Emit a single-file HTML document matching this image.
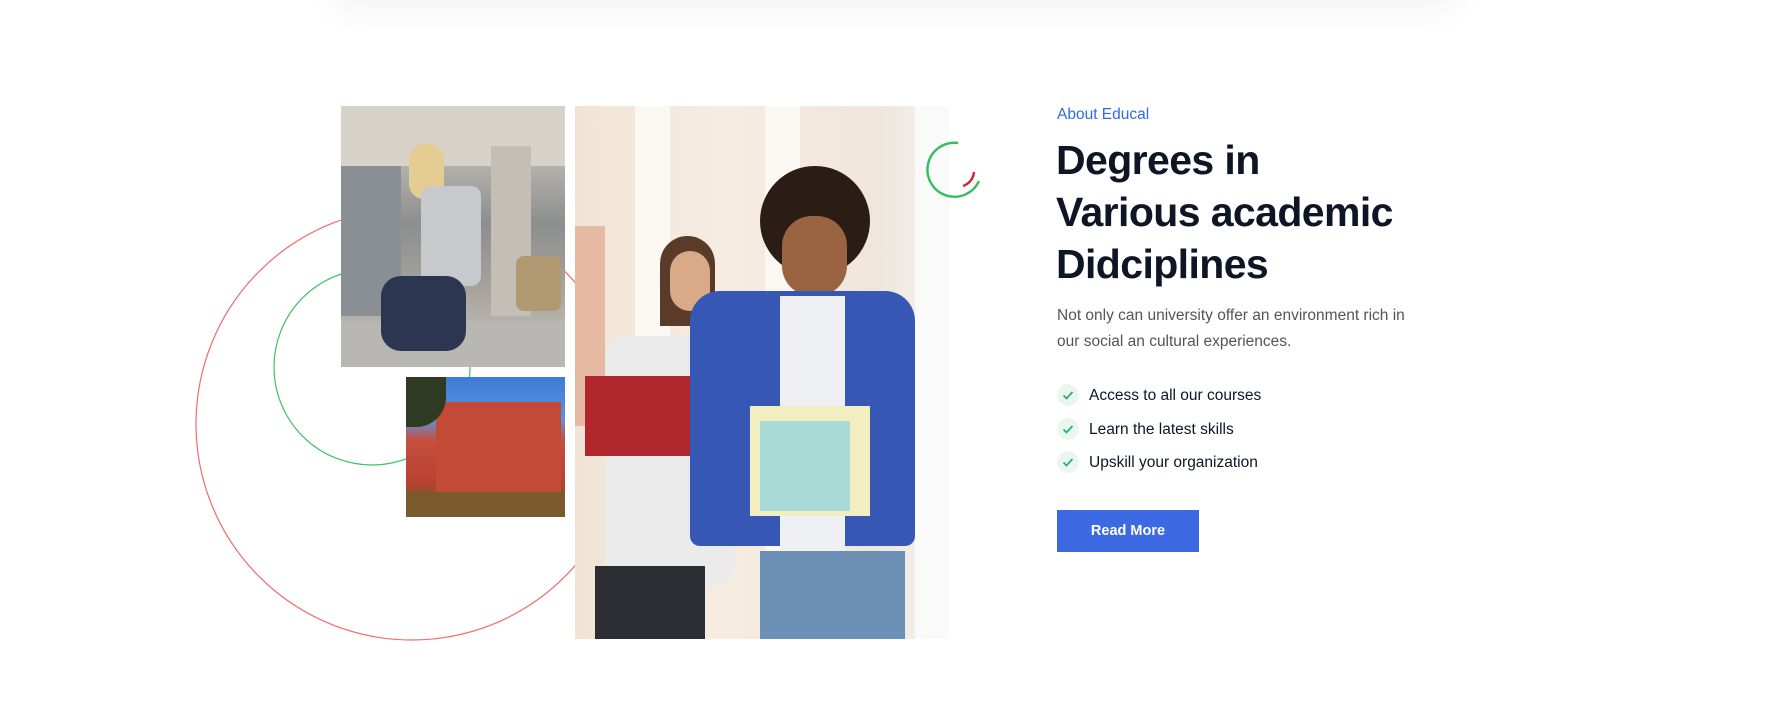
<!DOCTYPE html>
<html><head><meta charset="utf-8"><style>
*{margin:0;padding:0;box-sizing:border-box}
body{width:1773px;height:718px;background:#fff;position:relative;overflow:hidden;font-family:"Liberation Sans",Arial,sans-serif}
.shadow{position:absolute;left:330px;top:-30px;width:1130px;height:30px;box-shadow:0 10px 30px rgba(0,0,0,0.05);border-radius:20px}
.abs{position:absolute}
.p1{left:341px;top:106px;width:224px;height:261px;background:linear-gradient(180deg,#cfcac0 0%,#b9b6ae 20%,#8c8e8f 45%,#a7a39c 70%,#c8c6c2 100%);overflow:hidden}
.p2{left:406px;top:377px;width:159px;height:140px;background:linear-gradient(180deg,#3e7bd6 0%,#5a92e0 30%,#c45040 45%,#b9412f 75%,#6f5a2c 90%,#3a3a1e 100%);overflow:hidden}
.p3{left:575px;top:106px;width:374px;height:533px;background:linear-gradient(90deg,#f1e4d6 0%,#f6ece2 40%,#efe6dc 80%,#f3f3f1 100%);overflow:hidden}
.eyebrow{left:1057px;top:106px;color:#2f6ae5;font-size:15.5px}
h1{position:absolute;left:1056px;top:134px;font-size:41px;line-height:52px;font-weight:700;color:#0e1525;letter-spacing:-0.6px}
.para{left:1057px;top:303px;font-size:15.5px;line-height:26px;color:#53545b}
.li{position:absolute;left:1057px;font-size:15.5px;color:#0e1525}
.li .c{position:absolute;left:0;top:-3px;width:22px;height:22px;border-radius:50%;background:#eaf6f0}
.li span{position:absolute;left:32px;top:0;white-space:nowrap}
.btn{left:1057px;top:510px;width:142px;height:42px;background:#3d6ae3;color:#fff;font-weight:700;font-size:14.5px;text-align:center;line-height:42px}
</style></head><body>
<div class="shadow"></div>
<svg class="abs" style="left:0;top:0" width="1773" height="718">
<circle cx="412" cy="424" r="216" fill="none" stroke="#f26b6b" stroke-width="1.2"/>
<circle cx="372" cy="367" r="98" fill="none" stroke="#3bc263" stroke-width="1.2"/>
</svg>
<div class="abs p1">
 <div class="abs" style="left:0;top:0;width:224px;height:60px;background:#d8d3c8"></div>
 <div class="abs" style="left:0;top:60px;width:60px;height:150px;background:#8a8f94"></div>
 <div class="abs" style="left:150px;top:40px;width:40px;height:170px;background:#c3bfb7"></div>
 <div class="abs" style="left:0;top:215px;width:224px;height:46px;background:#b9b7b3"></div>
 <div class="abs" style="left:68px;top:38px;width:35px;height:55px;border-radius:15px;background:#e4cc92"></div>
 <div class="abs" style="left:80px;top:80px;width:60px;height:100px;border-radius:10px;background:#c7c9cc"></div>
 <div class="abs" style="left:40px;top:170px;width:85px;height:75px;border-radius:20px;background:#2c3650"></div>
 <div class="abs" style="left:175px;top:150px;width:45px;height:55px;border-radius:8px;background:#b19a72"></div>
</div>
<div class="abs p2">
 <div class="abs" style="left:30px;top:25px;width:125px;height:90px;background:#c24a36"></div>
 <div class="abs" style="left:0;top:0;width:40px;height:50px;background:#2f3a22;border-radius:0 0 30px 0"></div>
 <div class="abs" style="left:0;top:115px;width:159px;height:25px;background:#7a5a2a"></div>
</div>
<div class="abs p3">
 <div class="abs" style="left:60px;top:0;width:35px;height:533px;background:#fbf7f2"></div>
 <div class="abs" style="left:190px;top:0;width:35px;height:533px;background:#fbf8f4"></div>
 <div class="abs" style="left:340px;top:0;width:34px;height:533px;background:#fafafa"></div>
 <div class="abs" style="left:0;top:120px;width:30px;height:200px;background:#e6b9a3"></div>
 <div class="abs" style="left:85px;top:130px;width:55px;height:90px;border-radius:28px 28px 0 0;background:#5a3b2a"></div>
 <div class="abs" style="left:95px;top:145px;width:40px;height:60px;border-radius:20px;background:#d9a988"></div>
 <div class="abs" style="left:30px;top:230px;width:130px;height:250px;border-radius:20px;background:#ebebeb"></div>
 <div class="abs" style="left:10px;top:270px;width:150px;height:80px;background:#b0262d"></div>
 <div class="abs" style="left:20px;top:460px;width:110px;height:73px;background:#2d2e33"></div>
 <div class="abs" style="left:185px;top:60px;width:110px;height:110px;border-radius:50%;background:#2b1d15"></div>
 <div class="abs" style="left:207px;top:110px;width:65px;height:80px;border-radius:30px;background:#9a6342"></div>
 <div class="abs" style="left:115px;top:185px;width:225px;height:255px;border-radius:30px 30px 10px 10px;background:#3657b3"></div>
 <div class="abs" style="left:205px;top:190px;width:65px;height:260px;background:#eef0f4"></div>
 <div class="abs" style="left:175px;top:300px;width:120px;height:110px;background:#f3eec0"></div>
 <div class="abs" style="left:185px;top:315px;width:90px;height:90px;background:#a9dcd6"></div>
 <div class="abs" style="left:185px;top:445px;width:145px;height:88px;background:#6c8fb6"></div>
</div>
<svg class="abs" style="left:922px;top:138px" width="66" height="66">
<path d="M36 5 A27 27 0 1 0 57 43" fill="none" stroke="#34bf5f" stroke-width="2.4"/>
<path d="M52 34 A16 16 0 0 1 41 48" fill="none" stroke="#d3213f" stroke-width="2.4"/>
</svg>
<div class="abs eyebrow">About Educal</div>
<h1>Degrees in<br>Various academic<br>Didciplines</h1>
<div class="abs para">Not only can university offer an environment rich in<br>our social an cultural experiences.</div>
<div class="li" style="top:387px"><div class="c"><svg width="22" height="22"><path d="M6.5 11.5 L9.5 14.5 L15.5 8" fill="none" stroke="#24b36b" stroke-width="1.8"/></svg></div><span>Access to all our courses</span></div>
<div class="li" style="top:421px"><div class="c"><svg width="22" height="22"><path d="M6.5 11.5 L9.5 14.5 L15.5 8" fill="none" stroke="#24b36b" stroke-width="1.8"/></svg></div><span>Learn the latest skills</span></div>
<div class="li" style="top:454px"><div class="c"><svg width="22" height="22"><path d="M6.5 11.5 L9.5 14.5 L15.5 8" fill="none" stroke="#24b36b" stroke-width="1.8"/></svg></div><span>Upskill your organization</span></div>
<div class="abs btn">Read More</div>
</body></html>
